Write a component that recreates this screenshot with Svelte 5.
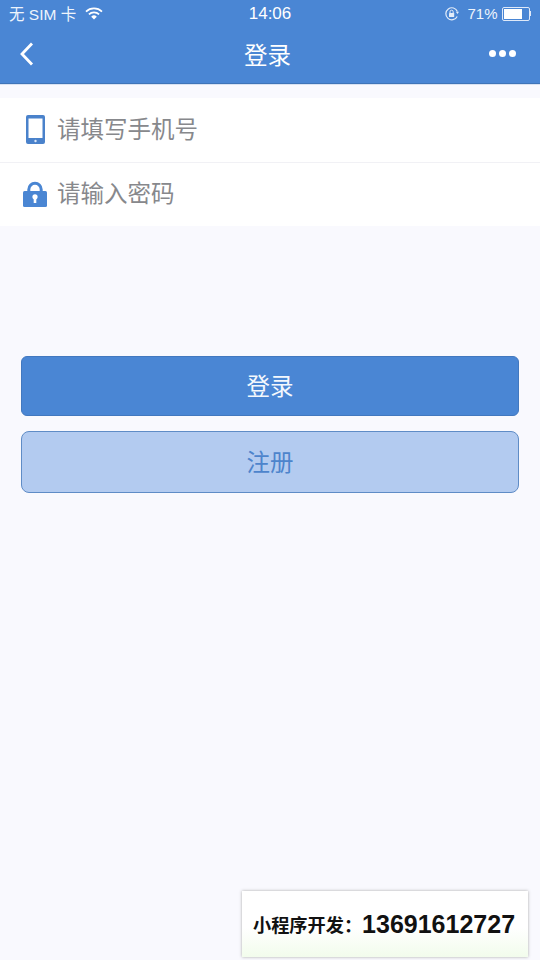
<script lang="ts">
  let phone = $state('');
  let password = $state('');
</script>

<main>
  <header>
    <div class="status">
      <div class="status-left">
        <span>无 SIM 卡</span>
        <svg width="18" height="13" viewBox="0 0 18 13">
          <path d="M1 4.6a11.5 11.5 0 0 1 16 0" fill="none" stroke="#fff" stroke-width="1.7" />
          <path d="M3.9 7.4a7.4 7.4 0 0 1 10.2 0" fill="none" stroke="#fff" stroke-width="1.7" />
          <path d="M9 12.6 6.2 9.7a4 4 0 0 1 5.6 0z" fill="#fff" />
        </svg>
      </div>
      <div class="clock">14:06</div>
      <div class="status-right">
        <svg width="17" height="16" viewBox="0 0 17 16">
          <path d="M13.2 10.5A6 6 0 1 1 13.4 5.500" fill="none" stroke="#e4edf9" stroke-width="1.2" />
          <path d="M11.8 5.800h3.2l-1.500 2.200z" fill="#e4edf9" />
          <rect x="5" y="7" width="5.200" height="4" rx=".6" fill="#e4edf9" />
          <path d="M6 7V5.800a1.600 1.600 0 0 1 3.200 0V7" fill="none" stroke="#e4edf9" />
        </svg>
        <span>71%</span>
        <div class="battery"><div class="battery-fill"></div></div>
        <div class="battery-tip"></div>
      </div>
    </div>
    <div class="nav">
      <svg class="back" width="16" height="24" viewBox="0 0 16 24">
        <path d="M13 1.500 3 12l10 10.500" fill="none" stroke="#fff" stroke-width="2.800" />
      </svg>
      <h1>登录</h1>
      <div class="dots"><i></i><i></i><i></i></div>
    </div>
  </header>

  <section class="fields">
    <label>
      <svg width="26" height="30" viewBox="0 0 26 30">
        <path fill-rule="evenodd" d="M6 0h15a2 2 0 0 1 2 2v25a2 2 0 0 1-2 2H6a2 2 0 0 1-2-2V2a2 2 0 0 1 2-2zm.500 3.500v19.500h14V3.500z" fill="#4a82cb" />
        <circle cx="13.500" cy="26" r="1.200" fill="#dbe7f7" />
      </svg>
      <input bind:value={phone} placeholder="请填写手机号" />
    </label>
    <label>
      <svg class="lock" width="26" height="28" viewBox="0 0 26 28">
        <path d="M6.800 13V9.500a6.200 6.200 0 0 1 12.400 0V13" fill="none" stroke="#4a86d3" stroke-width="3" />
        <rect x="1" y="11" width="24" height="16" rx="1.500" fill="#4a86d3" />
        <circle cx="13" cy="16.800" r="2.600" fill="#fff" />
        <rect x="11.700" y="17.500" width="2.600" height="5.500" fill="#fff" />
      </svg>
      <input type="text" bind:value={password} placeholder="请输入密码" />
    </label>
  </section>

  <div class="actions">
    <button class="primary">登录</button>
    <button class="secondary">注册</button>
  </div>

  <div class="contact">
    <strong>小程序开发：</strong><b>13691612727</b>
  </div>
</main>

<style>
  :global(body) {
    margin: 0;
    background: #f9f9fe;
  }

  main {
    position: relative;
    height: 960px;
    overflow: hidden;
    background: #f9f9fe;
    font-family: "Liberation Sans", "Noto Sans CJK SC", sans-serif;
  }

  header {
    height: 83px;
    background: #4a86d4;
    color: #fff;
    box-shadow: 0 1px 1px #3f74b8;
  }

  .status {
    display: grid;
    grid-template-columns: 1fr auto 1fr;
    align-items: center;
    height: 27px;
    padding: 0 9px;
    font-size: 15.500px;
    color: #eef4fc;
  }

  .status-left {
    display: flex;
    align-items: center;
    gap: 9px;
  }

  .status-left span {
    margin-bottom: 2px;
  }

  .clock {
    font-size: 17px;
    color: #fff;
  }

  .status-right {
    display: flex;
    align-items: center;
    justify-content: flex-end;
    gap: 4px;
  }

  .status-right span {
    font-size: 15px;
    margin-left: 2px;
  }

  .battery {
    width: 24px;
    height: 10px;
    padding: 1px;
    border: 1px solid #dfe9f8;
    border-radius: 2px;
  }

  .battery-fill {
    width: 76%;
    height: 100%;
    background: #fff;
  }

  .battery-tip {
    width: 1.500px;
    height: 5px;
    margin-left: -4px;
    background: #dfe9f8;
  }

  .nav {
    display: grid;
    grid-template-columns: 1fr auto 1fr;
    align-items: center;
    height: 55px;
    padding: 0 24px 2px 19px;
    box-sizing: border-box;
  }

  .back {
    justify-self: start;
  }

  h1 {
    margin: 0;
    font-size: 23.500px;
    font-weight: 400;
  }

  .dots {
    display: flex;
    justify-self: end;
    gap: 3px;
  }

  .dots i {
    width: 7px;
    height: 7px;
    border-radius: 50%;
    background: #fff;
  }

  .fields {
    margin-top: 15px;
    background: #fff;
  }

  label {
    display: flex;
    align-items: center;
    height: 64px;
    padding-left: 22px;
    box-sizing: border-box;
  }

  label + label {
    border-top: 1px solid #f1f1f5;
  }

  label svg {
    flex: none;
  }

  .lock {
    margin-bottom: 1px;
  }

  input {
    flex: 1;
    min-width: 0;
    margin-left: 9px;
    padding: 0;
    border: 0;
    outline: 0;
    background: transparent;
    font: inherit;
    font-size: 23.500px;
    color: #333;
  }

  input::placeholder {
    color: #87888c;
    opacity: 1;
  }

  .actions {
    display: flex;
    flex-direction: column;
    gap: 15px;
    margin: 130px 21px 0;
  }

  button {
    padding: 0 0 2px;
    font: inherit;
    font-size: 23.500px;
  }

  .primary {
    height: 60px;
    border: 1px solid #4278bf;
    border-radius: 6px;
    color: #f4f8fd;
    background: #4a86d4;
  }

  .secondary {
    height: 62px;
    border: 1.500px solid #5f8cc6;
    border-radius: 8px;
    color: #4d84cc;
    background: #b3cbf0;
  }

  .contact {
    position: absolute;
    left: 242px;
    top: 891px;
    width: 286px;
    height: 66px;
    box-sizing: border-box;
    display: flex;
    align-items: center;
    justify-content: center;
    padding-right: 2px;
    color: #111;
    background: linear-gradient(#fff 55%, #f2fcec);
    box-shadow: 0 0 3px #a9a9a9;
  }

  .contact strong {
    font-size: 18.200px;
  }

  .contact b {
    font-size: 25px;
  }
</style>
